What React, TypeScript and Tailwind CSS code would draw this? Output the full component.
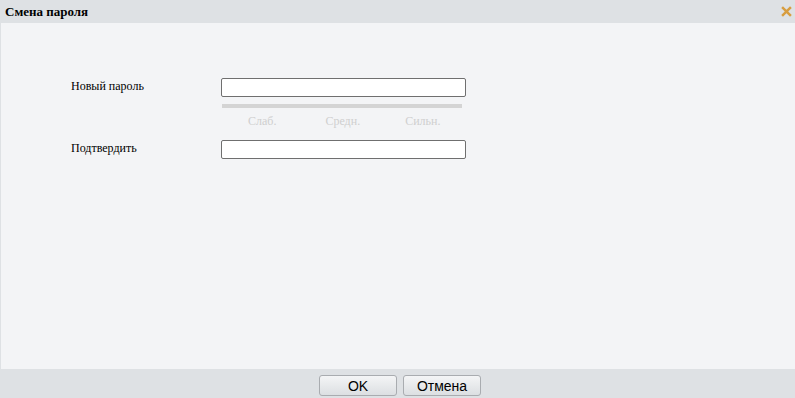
import React, { useState } from 'react';

const strengthLabels = ['Слаб.', 'Средн.', 'Сильн.'];

export default function App() {
  const [password, setPassword] = useState('');
  const [confirm, setConfirm] = useState('');

  return (
    <div className="w-[795px] h-[398px] flex flex-col bg-[#dee1e4] overflow-hidden">
      {/* header */}
      <div className="h-[23px] shrink-0 flex items-center justify-between pl-[5px] pr-[3px]">
        <span className="text-[13px] leading-[15px] font-bold text-black font-['Liberation_Serif','Times_New_Roman',serif]">
          Смена пароля
        </span>
        <svg width="11" height="11" viewBox="0 0 10 10" className="mb-[1px]">
          <path d="M1 1L9 9M9 1L1 9" stroke="#d79d3f" strokeWidth="2.2" />
        </svg>
      </div>

      {/* body */}
      <div className="flex-1 ml-[1px] bg-[#f3f4f6] pt-[55px] pl-[70px] text-[12px] leading-[15px] text-black font-['Liberation_Serif','Times_New_Roman',serif]">
        <div className="flex items-start">
          <label className="w-[150px] pt-[1px]">Новый пароль</label>
          <div className="w-[245px]">
            <input
              type="password"
              value={password}
              onChange={(e) => setPassword(e.target.value)}
              className="block w-[245px] h-[19px] bg-white border border-[#6f6f6f] rounded-[2px] outline-none px-1"
            />
            <div className="mt-[7px] ml-[1px] w-[240px] h-[4px] bg-[#d4d4d4]" />
            <div className="flex pl-[27px] mt-[6px] text-[#cfcfcf]">
              <span>{strengthLabels[0]}</span>
              <span className="ml-[49px]">{strengthLabels[1]}</span>
              <span className="ml-[45px]">{strengthLabels[2]}</span>
            </div>
          </div>
        </div>

        <div className="flex items-start mt-[11px]">
          <label className="w-[150px] pt-[1px]">Подтвердить</label>
          <input
            type="password"
            value={confirm}
            onChange={(e) => setConfirm(e.target.value)}
            className="block w-[245px] h-[19px] bg-white border border-[#6f6f6f] rounded-[2px] outline-none px-1"
          />
        </div>
      </div>

      {/* footer */}
      <div className="h-[29px] shrink-0 flex items-start justify-center gap-[6px] pt-[6px] pl-[5px] font-['Liberation_Sans',Arial,sans-serif]">
        <button className="w-[78px] h-[21px] rounded-[3px] border border-[#a9acb0] bg-gradient-to-b from-[#f4f5f6] to-[#dcdfe2] text-[14px] text-black leading-none">
          OK
        </button>
        <button className="w-[78px] h-[21px] rounded-[3px] border border-[#a9acb0] bg-gradient-to-b from-[#f4f5f6] to-[#dcdfe2] text-[14px] text-black leading-none">
          Отмена
        </button>
      </div>
    </div>
  );
}
